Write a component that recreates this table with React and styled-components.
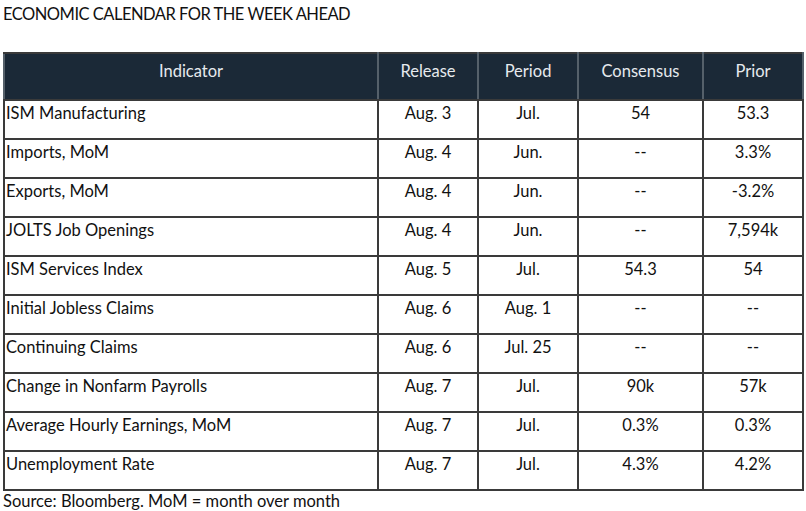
import styled, { createGlobalStyle } from 'styled-components';

const GlobalStyle = createGlobalStyle`
  html, body {
    margin: 0;
    padding: 0;
    background: #ffffff;
  }
  body {
    font-family: Lato, "Open Sans", sans-serif;
    color: #111111;
  }
`;

const rows = [
  ['ISM Manufacturing', 'Aug. 3', 'Jul.', '54', '53.3'],
  ['Imports, MoM', 'Aug. 4', 'Jun.', '--', '3.3%'],
  ['Exports, MoM', 'Aug. 4', 'Jun.', '--', '-3.2%'],
  ['JOLTS Job Openings', 'Aug. 4', 'Jun.', '--', '7,594k'],
  ['ISM Services Index', 'Aug. 5', 'Jul.', '54.3', '54'],
  ['Initial Jobless Claims', 'Aug. 6', 'Aug. 1', '--', '--'],
  ['Continuing Claims', 'Aug. 6', 'Jul. 25', '--', '--'],
  ['Change in Nonfarm Payrolls', 'Aug. 7', 'Jul.', '90k', '57k'],
  ['Average Hourly Earnings, MoM', 'Aug. 7', 'Jul.', '0.3%', '0.3%'],
  ['Unemployment Rate', 'Aug. 7', 'Jul.', '4.3%', '4.2%'],
];

const widths = [374, 100, 100, 125, 100];
const headers = ['Indicator', 'Release', 'Period', 'Consensus', 'Prior'];

export default function App() {
  return (
    <Page>
      <GlobalStyle />
      <Title>ECONOMIC CALENDAR FOR THE WEEK AHEAD</Title>
      <Table>
        <colgroup>
          {widths.map((w, i) => (
            <col key={i} style={{ width: w }} />
          ))}
        </colgroup>
        <thead>
          <tr>
            {headers.map(h => (
              <Th key={h}>{h}</Th>
            ))}
          </tr>
        </thead>
        <tbody>
          {rows.map(r => (
            <tr key={r[0]}>
              {r.map((c, i) => (
                <Td key={i} $first={i === 0}>
                  {c}
                </Td>
              ))}
            </tr>
          ))}
        </tbody>
      </Table>
      <Source>Source: Bloomberg. MoM = month over month</Source>
    </Page>
  );
}

const Page = styled.div`
  width: 806px;
  height: 511px;
  padding: 0 0 0 3px;
  box-sizing: border-box;
  overflow: hidden;
`;

const Title = styled.div`
  font-size: 16.5px;
  line-height: 20px;
  letter-spacing: -0.5px;
  padding-top: 4px;
  height: 52px;
  box-sizing: border-box;
  color: #111;
`;

const Table = styled.table`
  border-collapse: collapse;
  table-layout: fixed;
  width: 800px;
  border: 2px solid #3a3a3a;
`;

const Th = styled.th`
  background: #1b2937;
  color: #e6eaee;
  font-weight: 400;
  font-size: 16.5px;
  height: 47px;
  padding: 0 0 12px;
  box-sizing: border-box;
  text-align: center;
  vertical-align: middle;
  border: 2px solid #3a3a3a;
  border-left-color: #55606a;
  border-right-color: #55606a;
`;

const Td = styled.td`
  height: 39px;
  box-sizing: border-box;
  padding: 2px 0 0 ${p => (p.$first ? '1px' : '0')};
  font-size: 16.5px;
  line-height: 20px;
  vertical-align: top;
  text-align: ${p => (p.$first ? 'left' : 'center')};
  border: 2px solid #3a3a3a;
  color: #111;
  white-space: nowrap;
`;

const Source = styled.div`
  font-size: 16.5px;
  line-height: 20px;
  padding-top: 0;
  color: #111;
`;
